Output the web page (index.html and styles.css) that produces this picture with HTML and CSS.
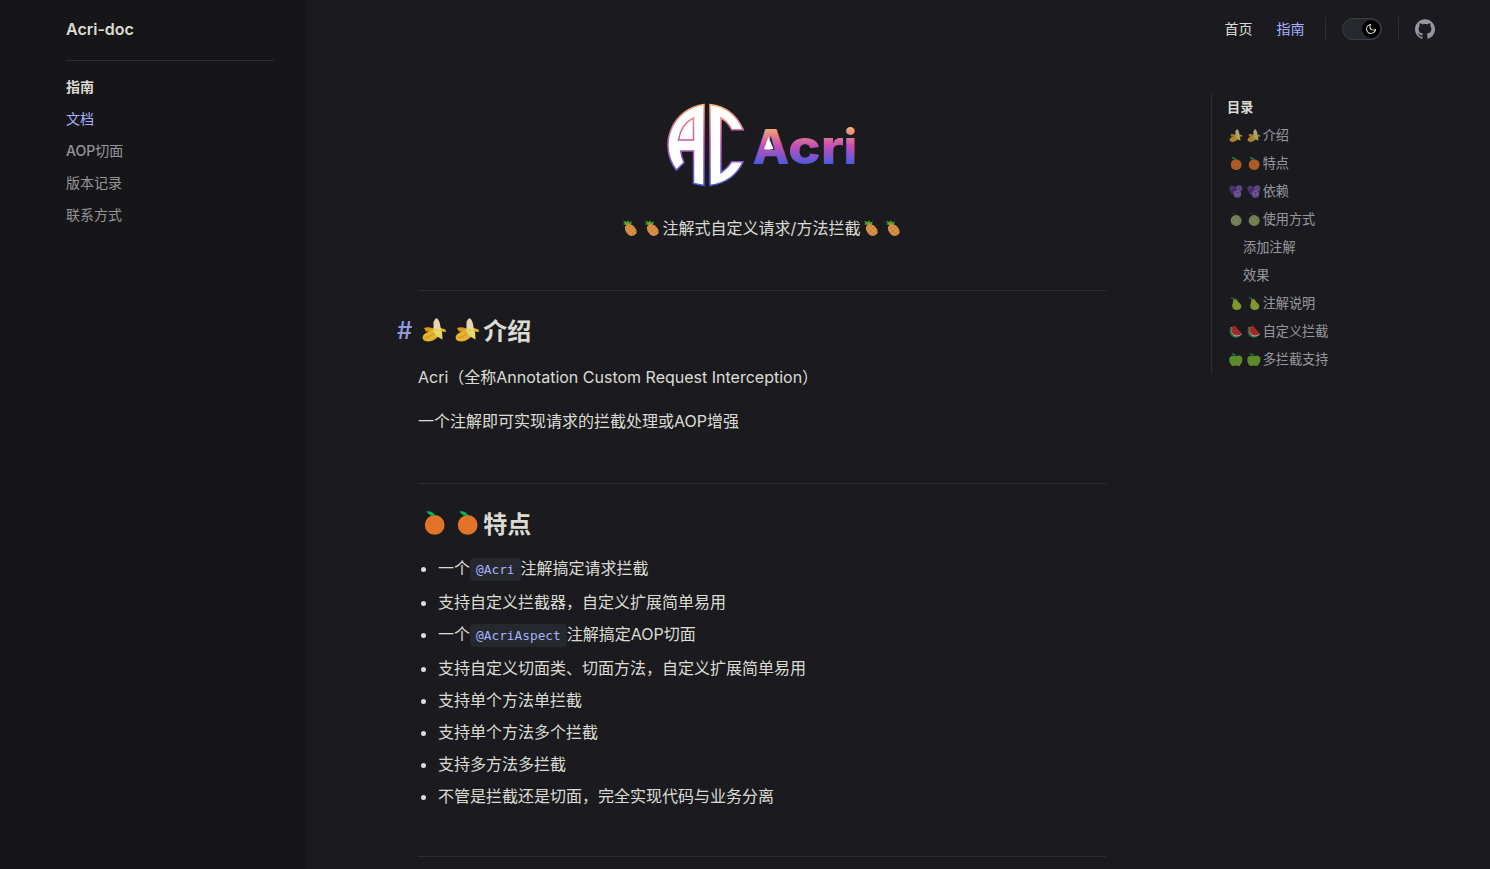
FILE: index.html
```html
<!DOCTYPE html>
<html lang="zh-CN">
<head>
<meta charset="utf-8">
<title>Acri-doc</title>
<link rel="stylesheet" href="styles.css">
</head>
<body>
<svg class="sprites" aria-hidden="true">
  <symbol id="banana" viewBox="0 0 32.6 24">
    <path d="M6 10Q10 8.500 15 10.500L14 14 8 13.500Z" fill="#d99b22"/>
    <path d="M15.500 12V4Q17 .3 18.500.3 20.500.5 22 6L23 12Q19 15 15.500 12Z" fill="#e9d6b0"/>
    <path d="M15.500 10Q12 13.500 8 15 3.500 17.500 5 21.500 8 25 15 22.500 19 21 21 17L23 10 27.500 11.500 28 14 23.500 13.500Z" fill="#e2b230"/>
    <path d="M15.500 9.500L19 13 22.500 9.500Q25 15 24.500 21.500L19 18.500 15.500 14Z" fill="#e5d967"/>
    <path d="M7 20Q14 18 17 15" fill="none" stroke="#c88d27" stroke-width=".8"/>
  </symbol>
  <symbol id="orange" viewBox="0 0 32.6 24">
    <circle cx="16.700" cy="13.900" r="9.900" fill="#e27429"/>
    <path d="M8.500.3Q15-.5 17.500 5 11 5.500 8.500.3Z" fill="#0cb057"/>
  </symbol>
  <symbol id="berries" viewBox="0 0 32.6 24">
    <circle cx="10" cy="7" r="5.500" fill="#694092"/>
    <circle cx="22" cy="6.500" r="6" fill="#7955ab"/>
    <circle cx="13" cy="12" r="6" fill="#563581"/>
    <circle cx="19" cy="16.500" r="7" fill="#8861bd"/>
    <circle cx="19.500" cy="14" r="2.700" fill="#583584" stroke="#b19bd3" stroke-width="1.400"/>
  </symbol>
  <symbol id="melon" viewBox="0 0 32.6 24">
    <circle cx="16.700" cy="13.700" r="10" fill="#9dac6c"/>
    <path d="M9 10L19 23M13 5Q22 12 24 19M20 5Q25 10 26 14M7 15L13 22" fill="none" stroke="#6f8150" stroke-width="1"/>
    <path d="M8 1L14 .5 16 4" fill="none" stroke="#51473a" stroke-width="1.500"/>
  </symbol>
  <symbol id="pear" viewBox="0 0 32.6 24">
    <path d="M11 5Q15 .5 19 6 19 9 23 11 29 17 24 22 16 26 11 21 8 16 11 11Z" fill="#acc536"/>
    <path d="M6 1Q11-1 14 4 9 5 6 1Z" fill="#139750"/>
    <path d="M12 4L15 7" stroke="#6e5432" stroke-width="1.500"/>
  </symbol>
  <symbol id="watermelon" viewBox="0 0 32.6 24">
    <path d="M6 3Q2 16 11 22 20 26 28 17Z" fill="#159150"/>
    <path d="M8 3Q5 15 13 20 20 23 27 17Z" fill="#efdfc3"/>
    <path d="M14 1L27 16Q20 21 13 18 6 13 8 5Z" fill="#df3236"/>
    <path d="M14 7v2M11 12l1 1M17 12v2M21 15l1 1" stroke="#371719" stroke-width="1.400"/>
  </symbol>
  <symbol id="apple" viewBox="0 0 32.6 24">
    <path d="M16 6Q25 2 28 9 29 18 22 24L16 23 10 24Q3 19 4.500 9 7 3 16 6Z" fill="#78b72d"/>
    <path d="M8 1Q14-1 17 5 11 6 8 1Z" fill="#139750"/>
  </symbol>
  <symbol id="pineapple" viewBox="0 0 32.6 24">
    <path d="M12 8L5 6 9 5 6 1 12 3 14 0 15 4 19 2 18 7Z" fill="#54a831"/>
    <path d="M9 10Q14 4 20 8 28 14 26 20 22 26 15 23 8 17 9 10Z" fill="#dc944b"/>
    <path d="M11 11L23 22M15 8L26 18M9 15L18 23M23 10L13 20M26 15L18 23M18 8L10 15" stroke="#b87231" stroke-width=".8"/>
  </symbol>
</svg>

<div class="layout">
  <aside class="sidebar">
    <div class="site-title">Acri-doc</div>
    <nav class="side-nav">
      <h2>指南</h2>
      <a class="active">文档</a>
      <a><span class="latin">AOP</span>切面</a>
      <a>版本记录</a>
      <a>联系方式</a>
    </nav>
  </aside>

  <div class="page">
    <header class="topbar">
      <a class="top-link">首页</a>
      <a class="top-link active">指南</a>
      <span class="divider"></span>
      <span class="switch"><span class="knob"><svg viewBox="0 0 24 24"><path d="M12.1,22c-0.3,0-0.6,0-0.9,0c-5.5-0.5-9.5-5.4-9-10.9c0.4-4.8,4.2-8.6,9-9c0.4,0,0.8,0.2,1,0.5c0.2,0.3,0.2,0.8-0.1,1.1c-2,2.7-1.4,6.4,1.3,8.4c2.1,1.6,5,1.6,7.1,0c0.3-0.2,0.7-0.3,1.1-0.1c0.3,0.2,0.5,0.5,0.5,0.9c-0.2,2.7-1.5,5.1-3.6,6.8C16.6,21.2,14.4,22,12.1,22z M9.3,4.4c-2.9,1-5,3.6-5.2,6.8c-0.4,4.4,2.8,8.3,7.2,8.7c2.1,0.2,4.2-0.4,5.8-1.8c1.1-0.9,1.9-2.1,2.4-3.4c-2.5,0.9-5.3,0.5-7.5-1.1C9.2,11.4,8.1,7.7,9.3,4.4z"/></svg></span></span>
      <span class="divider"></span>
      <svg class="github" viewBox="0 0 24 24"><path d="M12 .297c-6.630 0-12 5.373-12 12 0 5.303 3.438 9.800 8.205 11.385.6.113.82-.258.82-.577 0-.285-.01-1.040-.015-2.040-3.338.724-4.042-1.610-4.042-1.610C4.422 18.070 3.633 17.700 3.633 17.700c-1.087-.744.084-.729.084-.729 1.205.084 1.838 1.236 1.838 1.236 1.070 1.835 2.809 1.305 3.495.998.108-.776.417-1.305.76-1.605-2.665-.3-5.466-1.332-5.466-5.930 0-1.310.465-2.380 1.235-3.220-.135-.303-.54-1.523.105-3.176 0 0 1.005-.322 3.300 1.230.96-.267 1.980-.399 3-.405 1.020.006 2.040.138 3 .405 2.280-1.552 3.285-1.230 3.285-1.230.645 1.653.24 2.873.12 3.176.765.84 1.230 1.910 1.230 3.220 0 4.610-2.805 5.625-5.475 5.920.42.36.81 1.096.81 2.220 0 1.606-.015 2.896-.015 3.286 0 .315.21.69.825.57C20.565 22.092 24 17.592 24 12.297c0-6.627-5.373-12-12-12"/></svg>
    </header>

    <div class="columns">
      <main class="doc">
        <svg class="logo" viewBox="0 0 200 90" role="img" aria-label="Acri">
          <defs>
            <linearGradient id="dusk" gradientUnits="userSpaceOnUse" x1="0" y1="4" x2="0" y2="86">
              <stop offset="0" stop-color="#fcb072"/><stop offset=".45" stop-color="#c455b0"/><stop offset="1" stop-color="#465bd8"/>
            </linearGradient>
            <linearGradient id="dusk-word" gradientUnits="userSpaceOnUse" x1="0" y1="26" x2="0" y2="65">
              <stop offset="0" stop-color="#fcb36c"/><stop offset=".5" stop-color="#c750b4"/><stop offset="1" stop-color="#435be0"/>
            </linearGradient>
          </defs>
          <g fill="#fff" stroke="url(#dusk)" stroke-width="1.500">
            <path d="M42 4.500V85.500L31.500 83.500V51H18.700Q19.500 57 22 62.500L14.300 70A41 41 0 0 1 42 4.500Z"/>
            <path d="M31.500 18V40H16.500Q19 24 31.500 18Z"/>
            <path d="M48 4.500Q71 7 81.300 29.700H69.700Q66 22 59 18V72.500Q66 68 69.700 61.700H81Q72 82 48 85.500Z"/>
          </g>
          <g class="wordmark" fill="url(#dusk-word)">
            <text x="90.500" y="64">A</text>
            <text x="126" y="64" textLength="56" lengthAdjust="spacingAndGlyphs">cr</text>
            <text x="181.500" y="64">i</text>
          </g>
          <path d="M106.500 37L111.500 49Q106 50.500 102 49Z" fill="#fff"/>
        </svg>

        <p class="tagline"><svg class="fruit"><use href="#pineapple"/></svg><svg class="fruit"><use href="#pineapple"/></svg>注解式自定义请求/方法拦截<svg class="fruit"><use href="#pineapple"/></svg><svg class="fruit"><use href="#pineapple"/></svg></p>

        <section class="intro">
          <h2><span class="anchor">#</span><svg class="fruit"><use href="#banana"/></svg><svg class="fruit"><use href="#banana"/></svg>介绍</h2>
          <p>Acri（全称Annotation Custom Request Interception）</p>
          <p>一个注解即可实现请求的拦截处理或AOP增强</p>
        </section>

        <section class="features">
          <h2><svg class="fruit"><use href="#orange"/></svg><svg class="fruit"><use href="#orange"/></svg>特点</h2>
          <ul>
            <li class="has-code">一个<code>@Acri</code>注解搞定请求拦截</li>
            <li>支持自定义拦截器，自定义扩展简单易用</li>
            <li class="has-code">一个<code>@AcriAspect</code>注解搞定AOP切面</li>
            <li>支持自定义切面类、切面方法，自定义扩展简单易用</li>
            <li>支持单个方法单拦截</li>
            <li>支持单个方法多个拦截</li>
            <li>支持多方法多拦截</li>
            <li>不管是拦截还是切面，完全实现代码与业务分离</li>
          </ul>
        </section>
        <hr>
      </main>

      <nav class="toc">
        <h3>目录</h3>
        <a><svg class="fruit"><use href="#banana"/></svg><svg class="fruit"><use href="#banana"/></svg>介绍</a>
        <a><svg class="fruit"><use href="#orange"/></svg><svg class="fruit"><use href="#orange"/></svg>特点</a>
        <a><svg class="fruit"><use href="#berries"/></svg><svg class="fruit"><use href="#berries"/></svg>依赖</a>
        <a><svg class="fruit"><use href="#melon"/></svg><svg class="fruit"><use href="#melon"/></svg>使用方式</a>
        <a class="nested">添加注解</a>
        <a class="nested">效果</a>
        <a><svg class="fruit"><use href="#pear"/></svg><svg class="fruit"><use href="#pear"/></svg>注解说明</a>
        <a><svg class="fruit"><use href="#watermelon"/></svg><svg class="fruit"><use href="#watermelon"/></svg>自定义拦截</a>
        <a><svg class="fruit"><use href="#apple"/></svg><svg class="fruit"><use href="#apple"/></svg>多拦截支持</a>
      </nav>
    </div>
  </div>
</div>
</body>
</html>
```
FILE: styles.css
```css
:root {
  --bg: #1b1b1f;
  --bg-side: #161618;
  --line: #2e2e32;
  --text: rgba(255, 255, 245, .86);
  --muted: rgba(235, 235, 245, .6);
  --brand: #a8b1ff;
}

* { box-sizing: border-box; }

body {
  margin: 0;
  background: var(--bg);
  color: var(--text);
  font: 400 16px/24px Inter, "Noto Sans CJK SC", sans-serif;
}

h2, h3, p, ul { margin: 0; padding: 0; }

.sprites { display: none; }

.layout { display: flex; height: 869px; overflow: hidden; }

.sidebar {
  flex: 0 0 306px;
  padding: 0 32px 0 66px;
  background: var(--bg-side);
}

.site-title {
  height: 61px;
  border-bottom: 1px solid var(--line);
  font-weight: 600;
  line-height: 59px;
}

.side-nav { padding-top: 10px; font-size: 14px; line-height: 32px; }
.side-nav h2 { font-size: 14px; font-weight: 700; line-height: 32px; }
.side-nav a { display: block; color: var(--muted); }
.side-nav a.active { color: var(--brand); }
.latin { font-weight: 500; }

.page { flex: 1; min-width: 0; }

.topbar {
  display: flex;
  align-items: center;
  justify-content: flex-end;
  height: 58px;
  padding-right: 55px;
}

.top-link { margin-right: 24px; font-size: 14px; }
.top-link.active { margin-right: 20.5px; color: var(--brand); }

.divider { width: 1px; height: 24px; background: var(--line); }

.switch {
  display: flex;
  justify-content: flex-end;
  width: 40px;
  height: 22px;
  margin: 0 16px;
  padding: 1px;
  border: 1px solid #3c3f44;
  border-radius: 11px;
  background: #25282c;
}

.knob {
  display: flex;
  align-items: center;
  justify-content: center;
  width: 18px;
  height: 18px;
  border-radius: 50%;
  background: #000;
}

.knob svg { width: 12px; height: 12px; fill: var(--text); }
.github { width: 20px; height: 20px; margin-left: 16px; fill: #96969d; }

.columns { display: flex; align-items: flex-start; }

.doc { width: 688px; margin-left: 112px; padding-top: 42px; }

.logo { display: block; width: 200px; height: 90px; margin: 0 auto; }
.wordmark { font: 800 48px Inter, sans-serif; }

.fruit {
  display: inline-block;
  width: 1.358em;
  height: 1em;
  vertical-align: -.13em;
}

.tagline { padding-top: 24px; line-height: 28px; text-align: center; }
.tagline .fruit:first-child { margin-left: -1px; }

section { border-top: 1px solid var(--line); padding-top: 24px; }
section h2 { font-size: 24px; font-weight: 700; line-height: 33px; }
section h2 .fruit { vertical-align: -.1em; }
section p { margin-top: 16px; line-height: 28px; }
section h2 + p { margin-top: 15px; }

.intro { margin-top: 48px; }
.intro h2 { position: relative; }
.features { margin-top: 48px; }

.anchor {
  position: absolute;
  left: -21px;
  color: var(--brand);
  font-weight: 500;
  line-height: 31px;
  opacity: .85;
}

ul { margin-top: 15px; padding-left: 20px; }
li { height: 24px; margin-top: 8px; }
li.has-code { height: 26px; }

code {
  padding: 4px 6px;
  border-radius: 4px;
  background: #25282c;
  color: #a8b1ff;
  font: 12.8px "DejaVu Sans Mono", monospace;
}

hr { height: 1px; margin: 48px 0 0; border: 0; background: var(--line); }

.toc {
  height: 280px;
  margin: 35px 0 0 105px;
  padding-left: 15px;
  border-left: 1px solid var(--line);
  font-size: 13.15px;
  line-height: 28px;
}

.toc h3 { font-size: 13.15px; font-weight: 700; }
.toc a { display: block; color: var(--muted); }
.toc .nested { padding-left: 16px; }
.toc .fruit { opacity: .72; }
```
